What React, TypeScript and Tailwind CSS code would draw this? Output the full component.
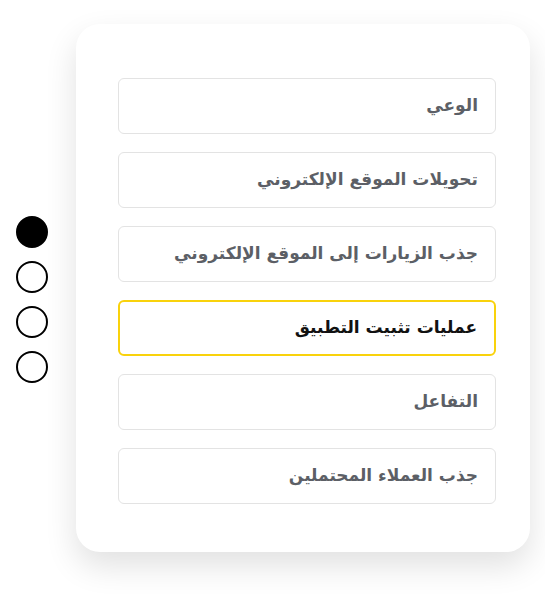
const items = [
  "الوعي",
  "تحويلات الموقع الإلكتروني",
  "جذب الزيارات إلى الموقع الإلكتروني",
  "عمليات تثبيت التطبيق",
  "التفاعل",
  "جذب العملاء المحتملين",
];

export default function App() {
  const active = 3;
  return (
    <div className="w-[545px] h-[600px] bg-white flex items-start overflow-hidden">
      <div className="flex flex-col gap-[13px] pl-4 pt-[216px]">
        {[0, 1, 2, 3].map((i) => (
          <span
            key={i}
            className={`block w-8 h-8 rounded-full border-2 border-black ${i === 0 ? "bg-black" : "bg-white"}`}
          />
        ))}
      </div>
      <div
        className="ml-[28px] mt-[24px] w-[454px] h-[528px] rounded-[24px] bg-white shadow-[0_14px_32px_rgba(0,0,0,0.12)] pl-[42px] pr-[34px] pt-[54px]"
        dir="rtl"
      >
        <ul className="flex flex-col gap-[18px]">
          {items.map((label, i) => (
            <li
              key={label}
              className={`h-[56px] flex items-center px-[17px] rounded-md text-[17px] font-bold ${
                i === active
                  ? "border-2 border-[#f9d20c] text-[#111]"
                  : "border border-[#e3e3e3] text-[#5c5f66]"
              }`}
              style={{ fontFamily: '"DejaVu Sans", "Noto Sans", sans-serif' }}
            >
              {label}
            </li>
          ))}
        </ul>
      </div>
    </div>
  );
}
